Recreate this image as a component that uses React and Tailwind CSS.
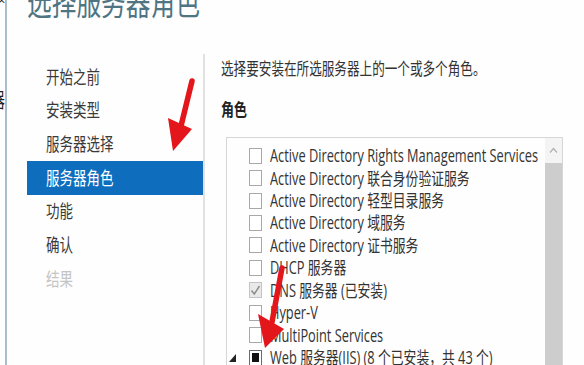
import React from "react";

const FONT = { fontFamily: '"Open Sans", "Noto Sans CJK SC", sans-serif' };

function T({ children, className = "" }) {
  return (
    <span className={"inline-block whitespace-nowrap origin-center scale-y-[1.35] " + className}>
      {children}
    </span>
  );
}

const navItems = [
  { label: "开始之前" },
  { label: "安装类型" },
  { label: "服务器选择" },
  { label: "服务器角色", active: true },
  { label: "功能" },
  { label: "确认" },
  { label: "结果", disabled: true },
];

const roles = [
  { label: "Active Directory Rights Management Services" },
  { label: "Active Directory 联合身份验证服务" },
  { label: "Active Directory 轻型目录服务" },
  { label: "Active Directory 域服务" },
  { label: "Active Directory 证书服务" },
  { label: "DHCP 服务器" },
  { label: "DNS 服务器 (已安装)", checked: true },
  { label: "Hyper-V" },
  { label: "MultiPoint Services" },
  { label: "Web 服务器(IIS) (8 个已安装，共 43 个)", partial: true, expand: true },
];

function Checkbox({ checked, partial }) {
  if (checked) {
    return (
      <div className="w-[13px] h-[16px] shrink-0 border border-[#c4c4c4] bg-[#e9e9e9] flex items-center justify-center">
        <svg width="11" height="12" viewBox="0 0 11 12">
          <path d="M1.5 6.5 L4.3 10 L9.5 2" fill="none" stroke="#8a8a8a" strokeWidth="1.4" />
        </svg>
      </div>
    );
  }
  if (partial) {
    return (
      <div className="w-[13px] h-[16px] shrink-0 border border-[#6a6a6a] bg-white flex items-center justify-center">
        <div className="w-[7px] h-[9px] bg-[#111]" />
      </div>
    );
  }
  return <div className="w-[13px] h-[16px] shrink-0 border border-[#a8a8a8] bg-white" />;
}

export default function App() {
  return (
    <div
      className="relative w-[584px] h-[365px] overflow-hidden bg-[#fefefe] flex text-[#333]"
      style={FONT}
    >
      {/* left clipped strip */}
      <div className="w-[5px] shrink-0 flex flex-col overflow-hidden">
        <div className="flex justify-end -mt-[12px] h-[16px] shrink-0">
          <span className="text-[14px] leading-[16px] text-[#222] whitespace-nowrap">服</span>
        </div>
        <div className="flex justify-end mt-[88px] shrink-0">
          <T className="text-[15px] leading-[16px] text-[#222]">器</T>
        </div>
      </div>
      <div className="w-[2px] shrink-0 bg-[#a9bdca]" />

      <div className="flex-1 min-h-0 flex flex-col">
        {/* title */}
        <div className="h-[50px] shrink-0 pl-[20px] overflow-visible">
          <div className="-mt-[17px]">
            <T className="text-[24.7px] leading-[30px] text-[#4f7482] origin-top">选择服务器角色</T>
          </div>
        </div>

        <div className="flex flex-1 min-h-0">
          {/* nav */}
          <div className="w-[196px] shrink-0 pl-[20px] pt-[10px]">
            {navItems.map((it) => (
              <div
                key={it.label}
                className={
                  "h-[33.7px] pl-[19px] flex items-center text-[13.5px] " +
                  (it.active
                    ? "bg-[#0e6dbd] text-white"
                    : it.disabled
                    ? "text-[#c4c4c4]"
                    : "text-[#3a3a3a]")
                }
              >
                <T>{it.label}</T>
              </div>
            ))}
          </div>
          <div className="w-[2px] shrink-0 bg-[#e1e1e1] mt-[4px]" />

          {/* content */}
          <div className="flex-1 min-h-0 pl-[16px] flex flex-col">
            <div className="h-[20px] shrink-0 mt-[10px] flex items-center text-[12.6px] text-[#333]">
              <T>选择要安装在所选服务器上的一个或多个角色。</T>
            </div>
            <div className="h-[20px] shrink-0 mt-[21px] flex items-center text-[13px] font-bold text-[#222]">
              <T>角色</T>
            </div>
            <div className="mt-[16px] ml-[5px] w-[337px] flex-1 min-h-0 overflow-hidden border-t border-l border-r border-[#d6d6d6] flex">
              <div className="flex-1 pt-[6.5px]">
                {roles.map((r) => (
                  <div key={r.label} className="h-[22.45px] flex items-center">
                    <div className="w-[22px] shrink-0 flex justify-end pr-[13px]">
                      {r.expand && (
                        <svg width="7" height="8" viewBox="0 0 7 8">
                          <polygon points="7,0 7,8 0,8" fill="#222" />
                        </svg>
                      )}
                    </div>
                    <Checkbox checked={r.checked} partial={r.partial} />
                    <div className="ml-[8px] text-[12.8px] text-[#333]">
                      <T>{r.label}</T>
                    </div>
                  </div>
                ))}
              </div>
              <div className="w-[17px] shrink-0 flex flex-col">
                <div className="h-[25px] shrink-0 bg-[#f4f4f4] flex items-center justify-center">
                  <svg width="9" height="7" viewBox="0 0 9 7">
                    <path d="M1 5.5 L4.5 1.5 L8 5.5" fill="none" stroke="#b0b0b0" strokeWidth="1.2" />
                  </svg>
                </div>
                <div className="flex-1 bg-[#cdcdcd]" />
              </div>
            </div>
          </div>
        </div>
      </div>

      {/* red annotation arrows */}
      <svg className="absolute inset-0 pointer-events-none" width="584" height="365" viewBox="0 0 584 365">
        <line x1="192" y1="81" x2="181" y2="126" stroke="#e3161b" strokeWidth="5.5" strokeLinecap="round" />
        <polygon points="168,118 192,129 173,151" fill="#e3161b" />
        <line x1="282" y1="268" x2="272" y2="322" stroke="#e3161b" strokeWidth="5.5" strokeLinecap="round" />
        <polygon points="258,314 284,329 265,348" fill="#e3161b" />
      </svg>
    </div>
  );
}
